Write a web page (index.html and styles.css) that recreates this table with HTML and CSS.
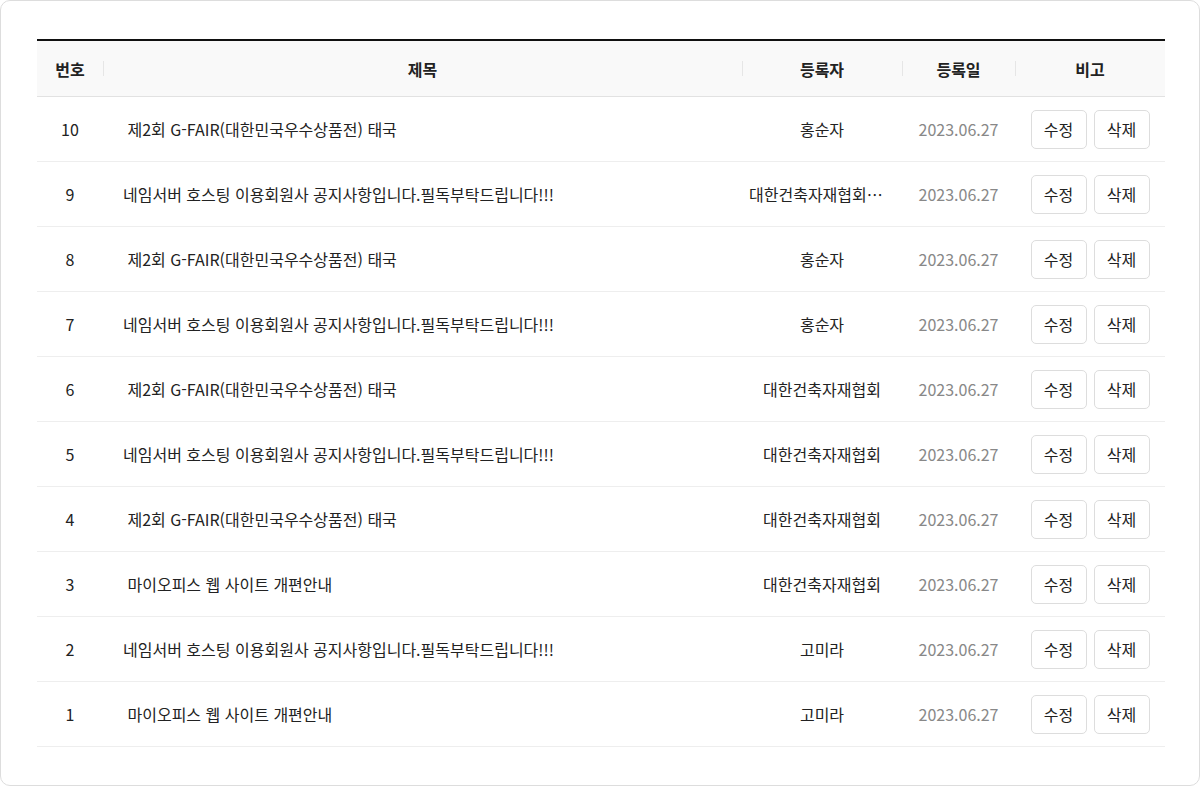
FILE: index.html
```html
<!DOCTYPE html>
<html lang="ko">
<head>
    <meta charset="UTF-8">
    <meta name="viewport" content="width=device-width, initial-scale=1.0">
    <title>게시판 관리</title>
    <link rel="stylesheet" href="styles.css">
</head>
<body>
    <div class="card">
        <table class="board">
            <colgroup>
                <col class="col-no">
                <col class="col-title">
                <col class="col-writer">
                <col class="col-date">
                <col class="col-etc">
            </colgroup>
            <thead>
                <tr>
                    <th>번호</th>
                    <th>제목</th>
                    <th>등록자</th>
                    <th>등록일</th>
                    <th>비고</th>
                </tr>
            </thead>
            <tbody>
                <tr>
                    <td>10</td>
                    <td class="title">&nbsp;제2회 G-FAIR(대한민국우수상품전) 태국</td>
                    <td class="writer">홍순자</td>
                    <td class="date">2023.06.27</td>
                    <td><div class="btns"><button>수정</button><button>삭제</button></div></td>
                </tr>
                <tr>
                    <td>9</td>
                    <td class="title">네임서버 호스팅 이용회원사 공지사항입니다.필독부탁드립니다!!!</td>
                    <td class="writer">대한건축자재협회관리자</td>
                    <td class="date">2023.06.27</td>
                    <td><div class="btns"><button>수정</button><button>삭제</button></div></td>
                </tr>
                <tr>
                    <td>8</td>
                    <td class="title">&nbsp;제2회 G-FAIR(대한민국우수상품전) 태국</td>
                    <td class="writer">홍순자</td>
                    <td class="date">2023.06.27</td>
                    <td><div class="btns"><button>수정</button><button>삭제</button></div></td>
                </tr>
                <tr>
                    <td>7</td>
                    <td class="title">네임서버 호스팅 이용회원사 공지사항입니다.필독부탁드립니다!!!</td>
                    <td class="writer">홍순자</td>
                    <td class="date">2023.06.27</td>
                    <td><div class="btns"><button>수정</button><button>삭제</button></div></td>
                </tr>
                <tr>
                    <td>6</td>
                    <td class="title">&nbsp;제2회 G-FAIR(대한민국우수상품전) 태국</td>
                    <td class="writer">대한건축자재협회</td>
                    <td class="date">2023.06.27</td>
                    <td><div class="btns"><button>수정</button><button>삭제</button></div></td>
                </tr>
                <tr>
                    <td>5</td>
                    <td class="title">네임서버 호스팅 이용회원사 공지사항입니다.필독부탁드립니다!!!</td>
                    <td class="writer">대한건축자재협회</td>
                    <td class="date">2023.06.27</td>
                    <td><div class="btns"><button>수정</button><button>삭제</button></div></td>
                </tr>
                <tr>
                    <td>4</td>
                    <td class="title">&nbsp;제2회 G-FAIR(대한민국우수상품전) 태국</td>
                    <td class="writer">대한건축자재협회</td>
                    <td class="date">2023.06.27</td>
                    <td><div class="btns"><button>수정</button><button>삭제</button></div></td>
                </tr>
                <tr>
                    <td>3</td>
                    <td class="title">&nbsp;마이오피스 웹 사이트 개편안내</td>
                    <td class="writer">대한건축자재협회</td>
                    <td class="date">2023.06.27</td>
                    <td><div class="btns"><button>수정</button><button>삭제</button></div></td>
                </tr>
                <tr>
                    <td>2</td>
                    <td class="title">네임서버 호스팅 이용회원사 공지사항입니다.필독부탁드립니다!!!</td>
                    <td class="writer">고미라</td>
                    <td class="date">2023.06.27</td>
                    <td><div class="btns"><button>수정</button><button>삭제</button></div></td>
                </tr>
                <tr>
                    <td>1</td>
                    <td class="title">&nbsp;마이오피스 웹 사이트 개편안내</td>
                    <td class="writer">고미라</td>
                    <td class="date">2023.06.27</td>
                    <td><div class="btns"><button>수정</button><button>삭제</button></div></td>
                </tr>
            </tbody>
        </table>
    </div>
</body>
</html>
```
FILE: styles.css
```css
body {
    margin: 0;
    font-family: "Noto Sans CJK KR", "Noto Sans", sans-serif;
    color: #222;
    background-color: #fff;
}

.card {
    box-sizing: border-box;
    height: 786px;
    padding: 38px 34px 0 36px;
    border: 1px solid #ddd;
    border-radius: 10px;
}

.board {
    width: 1128px;
    border-collapse: collapse;
    table-layout: fixed;
    border-top: 2px solid #111;
    font-size: 16px;
}

.col-no { width: 66px; }
.col-title { width: 639px; }
.col-writer { width: 160px; }
.col-date { width: 113px; }
.col-etc { width: 150px; }

.board th {
    position: relative;
    height: 55px;
    padding: 0;
    background-color: #f9f9f9;
    border-bottom: 1px solid #e2e2e2;
    font-weight: 700;
    text-align: center;
}

.board th + th::before {
    content: "";
    position: absolute;
    left: 0;
    top: 20px;
    width: 1px;
    height: 15px;
    background-color: #e6e6e6;
}

.board td {
    height: 64px;
    padding: 0;
    border-bottom: 1px solid #eee;
    text-align: center;
    white-space: nowrap;
}

.board td.title {
    padding-left: 20px;
    text-align: left;
}

.board td.writer {
    padding: 0 7px;
    overflow: hidden;
    text-overflow: ellipsis;
}

.board td.date {
    color: #888;
}

.btns {
    display: flex;
    justify-content: center;
    gap: 7px;
}

.btns button {
    width: 56px;
    height: 39px;
    padding: 0;
    font-family: inherit;
    font-size: 16px;
    color: #222;
    background-color: #fff;
    border: 1px solid #ddd;
    border-radius: 5px;
    cursor: pointer;
}
```
